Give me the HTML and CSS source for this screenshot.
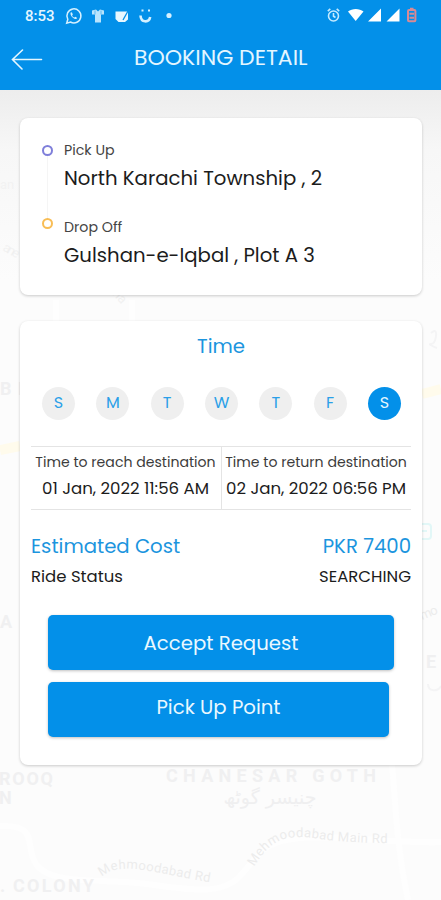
FILE: index.html
```html
<!DOCTYPE html>
<html lang="en">

<head>
    <meta charset="UTF-8">
    <meta name="viewport" content="width=device-width, initial-scale=1.0">
    <title>Booking Detail</title>
    <link rel="stylesheet" href="styles.css">
</head>

<body>
<header class="header">
    <div class="status-bar">
        <span class="clock">8:53</span>
        <svg class="status-left" width="110" height="18" viewBox="0 0 110 18" fill="none" stroke="#d5f0ff">
            <!-- whatsapp -->
            <path d="M1.700 16.200l1.100-3.900a7 7 0 1 1 2.700 2.700z" stroke-width="1.500"/>
            <path d="M5.900 5.300c-1.200 1.600.2 4 2 5.500 1.800 1.400 3.700 1.700 4.300.2l-1.800-1.200-1.100.8c-1-.4-1.900-1.300-2.200-2.200l.7-1-.8-2z" fill="#d5f0ff" stroke="none"/>
            <!-- shirt -->
            <path d="M27 3.500l4-1 2 2 2-2 4 1v4h-3v8h-6v-8h-3z" fill="#b9e4fd" stroke="none"/>
            <path d="M30 3.500v4M36 3.500v4" stroke="#5db9f2"/>
            <!-- card -->
            <path d="M50.500 4.500h12.500v8l-3 2.500h-6.500l-3-3z" fill="#e8f7ff" stroke="none"/>
            <path d="M58 13l5-9" stroke="#0390e9" stroke-width="1.300"/>
            <!-- smile -->
            <path d="M75.500 8.500c.4 7.500 8.500 7.500 9.700 1.500" stroke-width="2.600"/>
            <path d="M76.500 3.500h2M83 3.500h2" stroke-width="2.200"/>
            <circle cx="104" cy="8.500" r="2.600" fill="#d5f0ff" stroke="none"/>
        </svg>
        <svg class="status-right" width="92" height="18" viewBox="0 0 92 18" fill="none">
            <!-- alarm -->
            <g stroke="#c4eaff" stroke-width="1.600">
                <circle cx="6.500" cy="9" r="5"/>
                <path d="M6.500 6v3.200l2 1.300M.8 4.200l2.500-2.300M12.200 4.200L9.700 1.900"/>
            </g>
            <path d="M21 4.500c4-3.500 11.500-3.500 15.500 0L28.700 14z" fill="#fff"/>
            <path d="M54 1.500V14.500H41zM72.500 1.500V14.500h-13z" fill="#fff"/>
            <!-- battery -->
            <g stroke="#d88a95" stroke-width="2">
                <rect x="81" y="3" width="7.400" height="11.300" rx="1"/>
                <path d="M83 1.700h3.500M82.500 6.700h4.500M82.500 10.700h4.500"/>
            </g>
        </svg>
    </div>
    <div class="title-bar">
        <svg class="back" width="32" height="22" viewBox="0 0 32 22" fill="none" stroke="#e4f6ff" stroke-width="1.600" stroke-linecap="round">
            <path d="M30.500 11.500H1.500M11.500 2L1.500 11.500l9.500 9.500"/>
        </svg>
        <h1 class="title">BOOKING DETAIL</h1>
    </div>
</header>

<main class="content">
    <!-- faded map behind the cards -->
    <svg class="map" width="441" height="810" viewBox="0 90 441 810" fill="none">
        <g stroke="#fefefe" stroke-width="6">
            <path d="M56 300v22M132 300v22M0 826c40-2 24 20 36 38s50 16 90 18 90 18 112-4 20-36 62-40 90 6 141 4"/>
            <path d="M392 765c4 40 4 80 16 135"/>
        </g>
        <path d="M0 450l20-4M422 394l19-5" stroke="#fffbec" stroke-width="10"/>
        <g class="map-area">
            <text x="0" y="395" textLength="31">B E</text>
            <text x="0" y="628" textLength="14">A</text>
            <text x="-1" y="785" textLength="57">ROOQ</text>
            <text x="-1" y="804">N</text>
            <text x="166" y="782" textLength="213">CHANESAR GOTH</text>
            <text x="0" y="892">.</text>
            <text x="13" y="892" textLength="84">COLONY</text>
            <text x="426" y="668">E</text>
        </g>
        <text class="map-urdu" x="270" y="804" textLength="93">چنیسر گوٹھ</text>
        <path id="road-a" d="M102 877c16-18 60-2 112 6"/>
        <path id="road-b" d="M254 867c18-30 34-34 72-27q30 3 64 3"/>
        <g class="map-road">
            <text><textPath href="#road-a" textLength="111">Mehmoodabad Rd</textPath></text>
            <text><textPath href="#road-b" textLength="146">Mehmoodabad Main Rd</textPath></text>
            <text x="0" y="189" fill-opacity=".5">an</text>
            <text x="2" y="250" transform="rotate(30 2 250)" fill-opacity=".6" textLength="17">ane</text>
            <text x="422" y="620" transform="rotate(-22 422 620)" textLength="18">mo</text>
            <text x="112" y="294" transform="rotate(48 112 294)" fill-opacity=".7">na</text>
        </g>
        <rect x="417" y="524" width="14" height="15" rx="3" stroke="#e2f7f7" stroke-width="2"/>
        <path d="M421 531h6" stroke="#e2f7f7" stroke-width="2"/>
        <path d="M431 333q6-5 5 3t-5 8 6 4M428 684c0 8 10 8 13 2" stroke="#f4f4f5" stroke-width="2"/>
    </svg>

    <section class="card route">
        <div class="route-track">
            <span class="dot dot-pickup"></span>
            <span class="route-line"></span>
            <span class="dot dot-dropoff"></span>
        </div>
        <div class="route-stops">
            <div class="stop">
                <p class="stop-label">Pick Up</p>
                <p class="stop-name">North Karachi Township , 2</p>
            </div>
            <div class="stop">
                <p class="stop-label">Drop Off</p>
                <p class="stop-name">Gulshan-e-Iqbal , Plot A 3</p>
            </div>
        </div>
    </section>

    <section class="card booking">
        <h2 class="booking-title">Time</h2>
        <ul class="days">
            <li class="day">S</li>
            <li class="day">M</li>
            <li class="day">T</li>
            <li class="day">W</li>
            <li class="day">T</li>
            <li class="day">F</li>
            <li class="day active">S</li>
        </ul>
        <div class="times">
            <div class="time">
                <p class="time-label">Time to reach destination</p>
                <p class="time-value">01 Jan, 2022 11:56 AM</p>
            </div>
            <div class="time">
                <p class="time-label">Time to return destination</p>
                <p class="time-value">02 Jan, 2022 06:56 PM</p>
            </div>
        </div>
        <div class="row cost">
            <span>Estimated Cost</span>
            <span>PKR 7400</span>
        </div>
        <div class="row ride-status">
            <span>Ride Status</span>
            <span>SEARCHING</span>
        </div>
        <div class="buttons">
            <button class="btn btn-accept">Accept Request</button>
            <button class="btn btn-pickup">Pick Up Point</button>
        </div>
    </section>
</main>
</body>

</html>
```
FILE: styles.css
```css
* {
    box-sizing: border-box;
    margin: 0;
    padding: 0;
}

body {
    width: 441px;
    height: 900px;
    overflow: hidden;
    font-family: Poppins, Inter, sans-serif;
    color: #1c1c1c;
}

.header {
    height: 90px;
    background-color: #0390e9;
    color: #e4f6ff;
}

.status-bar {
    display: flex;
    align-items: center;
    height: 32px;
    padding: 0 22px 0 25px;
}

.clock {
    width: 40px;
    font-family: Roboto, sans-serif;
    font-size: 15px;
    font-weight: 500;
}

.status-right {
    margin-left: auto;
}

.title-bar {
    display: flex;
    align-items: center;
    height: 54px;
    padding-left: 11px;
}

.title {
    margin-left: 91px;
    padding-bottom: 3px;
    font-size: 22px;
    font-weight: 400;
    line-height: 30px;
}

.content {
    position: relative;
    display: flex;
    flex-direction: column;
    gap: 26px;
    height: 810px;
    padding: 28px 19px 0 20px;
    background: linear-gradient(#ededed, #f7f7f7 60px, #fcfcfc 190px);
}

.map {
    position: absolute;
    top: 0;
    left: 0;
}

.map-area {
    font-family: Roboto, sans-serif;
    font-size: 18px;
    font-weight: 700;
    letter-spacing: 3px;
    fill: #f0f0f1;
}

.map-urdu {
    font-family: "DejaVu Sans", sans-serif;
    font-size: 19px;
    text-anchor: middle;
    fill: #efeff0;
}

.map-road {
    font-family: Roboto, sans-serif;
    font-size: 13px;
    fill: #ececec;
}

.card {
    position: relative;
    border-radius: 8px;
    background-color: #fff;
    box-shadow: 0 1px 3px rgba(0, 0, 0, .2);
}

.route {
    display: flex;
    height: 177px;
    padding: 22px 22px 0;
}

.route-track {
    display: flex;
    flex-direction: column;
    align-items: center;
    width: 11px;
    height: 84px;
    margin-top: 5px;
}

.dot {
    width: 11px;
    height: 11px;
    border: 2px solid #7f7fda;
    border-radius: 50%;
}

.dot-dropoff {
    border-color: #f8bd55;
}

.route-line {
    flex: 1;
    width: 1px;
    background-color: #f5f5f5;
}

.route-stops {
    display: flex;
    flex-direction: column;
    gap: 24px;
    margin-left: 11px;
}

.stop-label {
    font-size: 14.200px;
    line-height: 20px;
    color: #444;
}

.stop-name {
    margin-top: 3px;
    font-size: 19.700px;
    line-height: 30px;
    white-space: nowrap;
}

.booking {
    height: 444px;
    padding: 10px 11px 0;
}

.booking-title {
    font-size: 19.700px;
    font-weight: 400;
    line-height: 30px;
    text-align: center;
    color: #1c95de;
}

.days {
    display: flex;
    justify-content: space-between;
    margin-top: 26px;
    padding: 0 10px 0 11px;
    list-style: none;
}

.day {
    width: 33px;
    height: 33px;
    border-radius: 50%;
    background-color: #efefef;
    font-size: 16px;
    line-height: 32px;
    text-align: center;
    color: #2a9fe8;
}

.day.active {
    background-color: #0390e9;
    color: #e4f6ff;
}

.times {
    display: flex;
    height: 64px;
    margin-top: 26px;
    border-top: 1px solid #e4e4e4;
    border-bottom: 1px solid #e4e4e4;
}

.time {
    width: 190px;
    padding: 4px 1px 0 0;
    text-align: center;
    white-space: nowrap;
}

.time + .time {
    border-left: 1px solid #e4e4e4;
}

.time-label {
    font-size: 14.100px;
    line-height: 22px;
    color: #3c3c3c;
}

.time-value {
    margin-top: 4px;
    font-size: 16.600px;
    line-height: 24px;
}

.row {
    display: flex;
    justify-content: space-between;
}

.cost {
    margin-top: 21px;
    font-size: 19.700px;
    line-height: 30px;
    color: #1c95de;
}

.ride-status {
    margin-top: 4px;
    font-size: 16.500px;
    line-height: 24px;
}

.buttons {
    display: flex;
    flex-direction: column;
    gap: 12px;
    margin: 26px 17px 0;
}

.btn {
    height: 55px;
    border: none;
    border-radius: 5px;
    background-color: #0390e9;
    box-shadow: 0 1px 3px rgba(0, 0, 0, .25);
    font: inherit;
    font-size: 19.700px;
    color: #eaf8ff;
}

.btn-pickup {
    width: 341px;
    padding-bottom: 5px;
}
```
